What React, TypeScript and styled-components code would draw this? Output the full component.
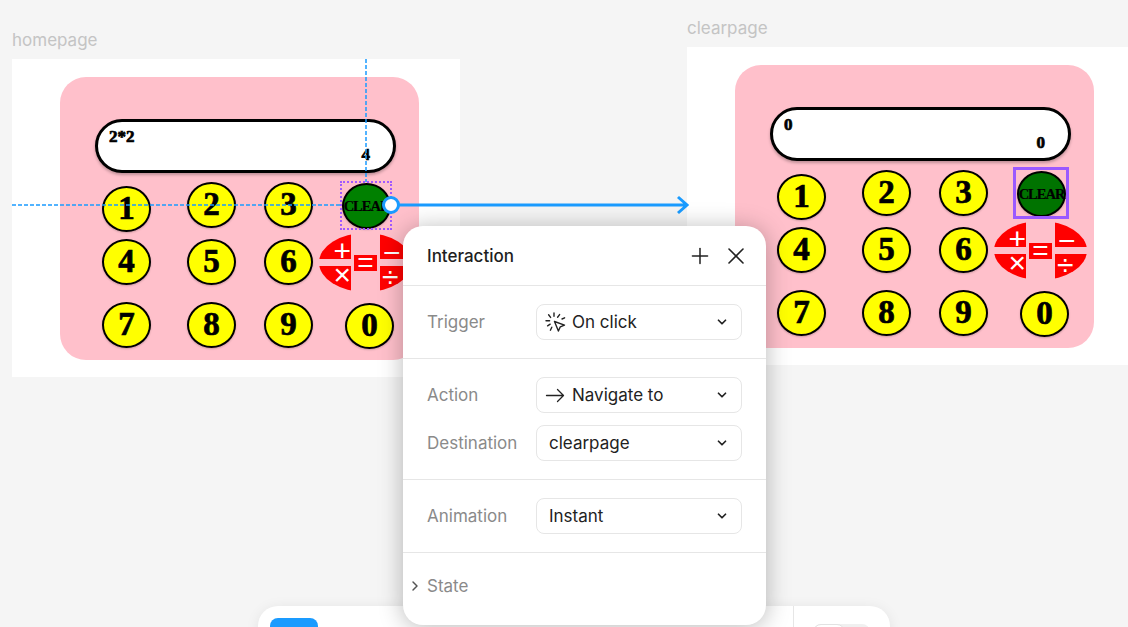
import React from "react";
import styled, { createGlobalStyle } from "styled-components";
import { ChevronDown, ChevronRight, Plus, X } from "lucide-react";

const GlobalStyle = createGlobalStyle`
  html, body {
    margin: 0;
    padding: 0;
    background: #f5f5f5;
  }
  body {
    font-family: Inter, "Noto Sans", sans-serif;
  }
`;

const Canvas = styled.div`
  position: relative;
  width: 1128px;
  height: 627px;
  overflow: hidden;
  background: #f5f5f5;
`;

// artboards sit on a free canvas, so their place is the content
const Artboard = styled.div<{ $x: number; $y: number }>`
  position: absolute;
  left: ${(p) => p.$x}px;
  top: ${(p) => p.$y}px;
  width: 448px;
`;

const BoardName = styled.div`
  height: 20px;
  line-height: 20px;
  margin-bottom: 9px;
  font-size: 17px;
  color: #c4c4c4;
`;

const Sheet = styled.div`
  width: 448px;
  height: 318px;
  padding: 18px 0 0 48px;
  box-sizing: border-box;
  background: #fff;
`;

const Card = styled.div`
  width: 359px;
  height: 283px;
  padding: 42px 0 0 35px;
  box-sizing: border-box;
  border-radius: 26px;
  background: #ffc0cb;
`;

const Display = styled.div`
  width: 301px;
  height: 54px;
  padding: 6px 23px 6px 11px;
  box-sizing: border-box;
  display: flex;
  flex-direction: column;
  justify-content: space-between;
  border: 3px solid #000;
  border-radius: 27px;
  background: #fff;
  box-shadow: 0 2px 3px rgba(0, 0, 0, 0.25);
  font-family: "Liberation Serif", serif;
  font-weight: 700;
  font-size: 17px;
  line-height: 18px;
  color: #000;
  -webkit-text-stroke: 0.7px #000;
`;

const Result = styled.div`
  align-self: flex-end;
`;

const Keys = styled.div`
  display: grid;
  grid-template-columns: 85px 77px 78px 60px;
  grid-template-rows: 57px 63px 46px;
  margin: 9px 0 0 7px;
`;

const Key = styled.div<{ $down?: number; $right?: number; $green?: string }>`
  width: 49px;
  height: 46px;
  margin-top: ${(p) => p.$down ?? 0}px;
  margin-left: ${(p) => p.$right ?? 0}px;
  padding-bottom: ${(p) => (p.$green ? 0 : 2)}px;
  box-sizing: border-box;
  display: flex;
  align-items: center;
  justify-content: center;
  border: 2.5px solid #000;
  border-radius: 50%;
  background: ${(p) => p.$green ?? "#ffff00"};
  box-shadow: 0 1px 2px rgba(0, 0, 0, 0.2);
  font-family: "Liberation Serif", serif;
  font-weight: 700;
  font-size: ${(p) => (p.$green ? 14.5 : 33)}px;
  letter-spacing: ${(p) => (p.$green ? -1 : 0)}px;
  color: #000;
  -webkit-text-stroke: ${(p) => (p.$green ? 0.2 : 0.7)}px #000;
`;

const Operators = styled.div`
  display: flex;
  align-items: center;
  gap: 3px;
  width: 93px;
  height: 59px;
  margin: -6px 0 0 -23px;
  font-family: "Liberation Sans", sans-serif;
  color: #fff;
`;

const OperatorSide = styled.div`
  display: flex;
  flex-direction: column;
  justify-content: space-between;
  width: 32px;
  height: 59px;
`;

// each slice is a quarter of one 93x59 ellipse; $at is the ellipse centre in slice coordinates
const Slice = styled.div<{ $at: string; $align: "flex-start" | "flex-end"; $pad: string }>`
  display: flex;
  align-items: center;
  justify-content: ${(p) => p.$align};
  height: 26px;
  padding: ${(p) => p.$pad};
  box-sizing: border-box;
  clip-path: ellipse(46.5px 29.5px at ${(p) => p.$at});
  background: #ff0000;
  font-size: 30px;
  line-height: 16px;
`;

const EqualsTile = styled.div`
  flex: 1;
  height: 16px;
  display: flex;
  align-items: center;
  justify-content: center;
  background: #ff0000;
  font-size: 28px;
`;

const Calculator: React.FC<{ expression: string; result: string; green: string }> = ({
  expression,
  result,
  green,
}) => (
  <Card>
    <Display>
      <div>{expression}</div>
      <Result>{result}</Result>
    </Display>
    <Keys>
      <Key $down={4}>1</Key>
      <Key>2</Key>
      <Key>3</Key>
      <Key $down={1} $green={green}>
        CLEAR
      </Key>
      <Key>4</Key>
      <Key>5</Key>
      <Key>6</Key>
      <Operators>
        <OperatorSide>
          <Slice $at="46.5px 29.5px" $align="flex-end" $pad="10px 0 0 0">+</Slice>
          <Slice $at="46.5px -3.5px" $align="flex-end" $pad="0 0 8px 0">×</Slice>
        </OperatorSide>
        <EqualsTile>=</EqualsTile>
        <OperatorSide>
          <Slice $at="-14.5px 29.5px" $align="flex-start" $pad="14px 0 0 3px">−</Slice>
          <Slice $at="-14.5px -3.5px" $align="flex-start" $pad="0 0 4px 2px">÷</Slice>
        </OperatorSide>
      </Operators>
      <Key>7</Key>
      <Key>8</Key>
      <Key>9</Key>
      <Key $down={1} $right={3}>0</Key>
    </Keys>
  </Card>
);

const Wires = styled.svg`
  position: absolute;
  left: 0;
  top: 0;
  pointer-events: none;
`;

const HoverOutline = styled.div`
  position: absolute;
  left: 340px;
  top: 181px;
  width: 52px;
  height: 49px;
  box-sizing: border-box;
  border: 2px dotted #a259ff;
`;

const TargetOutline = styled.div`
  position: absolute;
  left: 1013px;
  top: 167px;
  width: 56px;
  height: 52px;
  box-sizing: border-box;
  border: 3px solid #9b59ff;
`;

const Toolbar = styled.div`
  position: absolute;
  left: 258px;
  top: 606px;
  width: 632px;
  height: 64px;
  padding: 12px 0 0 12px;
  box-sizing: border-box;
  display: flex;
  border-radius: 20px;
  background: #fff;
  box-shadow: 0 2px 14px rgba(0, 0, 0, 0.08);
`;

const ToolButton = styled.div`
  width: 48px;
  height: 40px;
  border-radius: 8px;
  background: #1a9bff;
`;

const ToolDivider = styled.div`
  width: 1px;
  height: 64px;
  margin: -12px 0 0 475px;
  background: #e6e6e6;
`;

const ToolSwitch = styled.div`
  width: 57px;
  height: 30px;
  margin: 6px 0 0 19px;
  border-radius: 8px;
  background: #f0f0f0;
`;

const SwitchKnob = styled.div`
  width: 32px;
  height: 30px;
  border: 1px solid #e2e2e2;
  border-radius: 8px;
  box-sizing: border-box;
  background: #fff;
`;

const Panel = styled.div`
  position: absolute;
  left: 403px;
  top: 226px;
  width: 363px;
  height: 399px;
  overflow: hidden;
  border-radius: 20px;
  background: #fff;
  box-shadow: 0 2px 24px rgba(0, 0, 0, 0.28);
  color: #1e1e1e;
  font-size: 17px;
`;

const PanelHeader = styled.div`
  display: flex;
  align-items: center;
  height: 60px;
  padding: 1px 16px 0 24px;
  box-sizing: border-box;
  border-bottom: 1px solid #e6e6e6;
`;

const PanelTitle = styled.div`
  flex: 1;
  font-weight: 500;
`;

const HeaderIcons = styled.div`
  display: flex;
  align-items: center;
  gap: 9px;
  color: #222;
`;

const Section = styled.div`
  display: flex;
  flex-direction: column;
  gap: 12px;
  padding: 18px 24px 18px 24px;
  border-bottom: 1px solid #e6e6e6;
`;

const Row = styled.div`
  display: flex;
  align-items: center;
`;

const Label = styled.div`
  width: 109px;
  color: #8a8a8a;
`;

const Select = styled.div<{ $icon?: boolean }>`
  display: flex;
  align-items: center;
  gap: 6px;
  width: 206px;
  height: 36px;
  padding: 0 12px 0 ${(p) => (p.$icon ? 8 : 12)}px;
  box-sizing: border-box;
  border: 1px solid #e6e6e6;
  border-radius: 8px;
  color: #222;
`;

const SelectText = styled.div`
  flex: 1;
`;

const StateRow = styled.div`
  display: flex;
  align-items: center;
  height: 66px;
  padding-left: 4px;
  gap: 4px;
  color: #8a8a8a;
`;

const StateChevron = styled(ChevronRight)`
  color: #555;
`;

const ClickIcon = () => (
  <svg width="21" height="21" viewBox="0 0 21 21" fill="none" stroke="#222" strokeWidth="1.4" strokeLinecap="round" strokeLinejoin="round">
    <path d="M9.5 9.5l10 3.6-4.2 1.7-1.9 4.2z" />
    <path d="M9 1v3.2M3.6 2.8l2 2.6M14.6 2.6l-2 2.6M1 8.8h3.6M17 7l2.6-1.2M2.6 13.8l2.6-1.6M6.8 15.2l-1.4 3" />
  </svg>
);

const NavigateIcon = () => (
  <svg width="21" height="21" viewBox="0 0 21 21" fill="none" stroke="#222" strokeWidth="1.3" strokeLinecap="round" strokeLinejoin="round">
    <path d="M1.5 10.5h17M12.5 4.5l6 6-6 6" />
  </svg>
);

const Chevron = () => <ChevronDown size={14} strokeWidth={3} color="#222" />;

const App: React.FC = () => (
  <>
    <GlobalStyle />
    <Canvas>
      <Artboard $x={12} $y={30}>
        <BoardName>homepage</BoardName>
        <Sheet>
          <Calculator expression="2*2" result="4" green="#008000" />
        </Sheet>
      </Artboard>
      <Artboard $x={687} $y={18}>
        <BoardName>clearpage</BoardName>
        <Sheet>
          <Calculator expression="0" result="0" green="#007300" />
        </Sheet>
      </Artboard>

      <HoverOutline />
      <TargetOutline />
      <Wires width="1128" height="627" viewBox="0 0 1128 627" fill="none">
        <path d="M12 205H340M366 59V182" stroke="#1a9bff" strokeWidth="1.5" strokeDasharray="4 2" />
        <path d="M391 205H686M678 197l9 8-9 8" stroke="#1a9bff" strokeWidth="3" />
        <circle cx="391" cy="205" r="7.5" fill="#fff" stroke="#1a9bff" strokeWidth="3" />
      </Wires>

      <Toolbar>
        <ToolButton />
        <ToolDivider />
        <ToolSwitch>
          <SwitchKnob />
        </ToolSwitch>
      </Toolbar>

      <Panel>
        <PanelHeader>
          <PanelTitle>Interaction</PanelTitle>
          <HeaderIcons>
            <Plus size={26} strokeWidth={1.4} />
            <X size={28} strokeWidth={1.4} />
          </HeaderIcons>
        </PanelHeader>
        <Section>
          <Row>
            <Label>Trigger</Label>
            <Select $icon>
              <ClickIcon />
              <SelectText>On click</SelectText>
              <Chevron />
            </Select>
          </Row>
        </Section>
        <Section>
          <Row>
            <Label>Action</Label>
            <Select $icon>
              <NavigateIcon />
              <SelectText>Navigate to</SelectText>
              <Chevron />
            </Select>
          </Row>
          <Row>
            <Label>Destination</Label>
            <Select>
              <SelectText>clearpage</SelectText>
              <Chevron />
            </Select>
          </Row>
        </Section>
        <Section>
          <Row>
            <Label>Animation</Label>
            <Select>
              <SelectText>Instant</SelectText>
              <Chevron />
            </Select>
          </Row>
        </Section>
        <StateRow>
          <StateChevron size={16} strokeWidth={2.2} />
          <div>State</div>
        </StateRow>
      </Panel>
    </Canvas>
  </>
);

export default App;
